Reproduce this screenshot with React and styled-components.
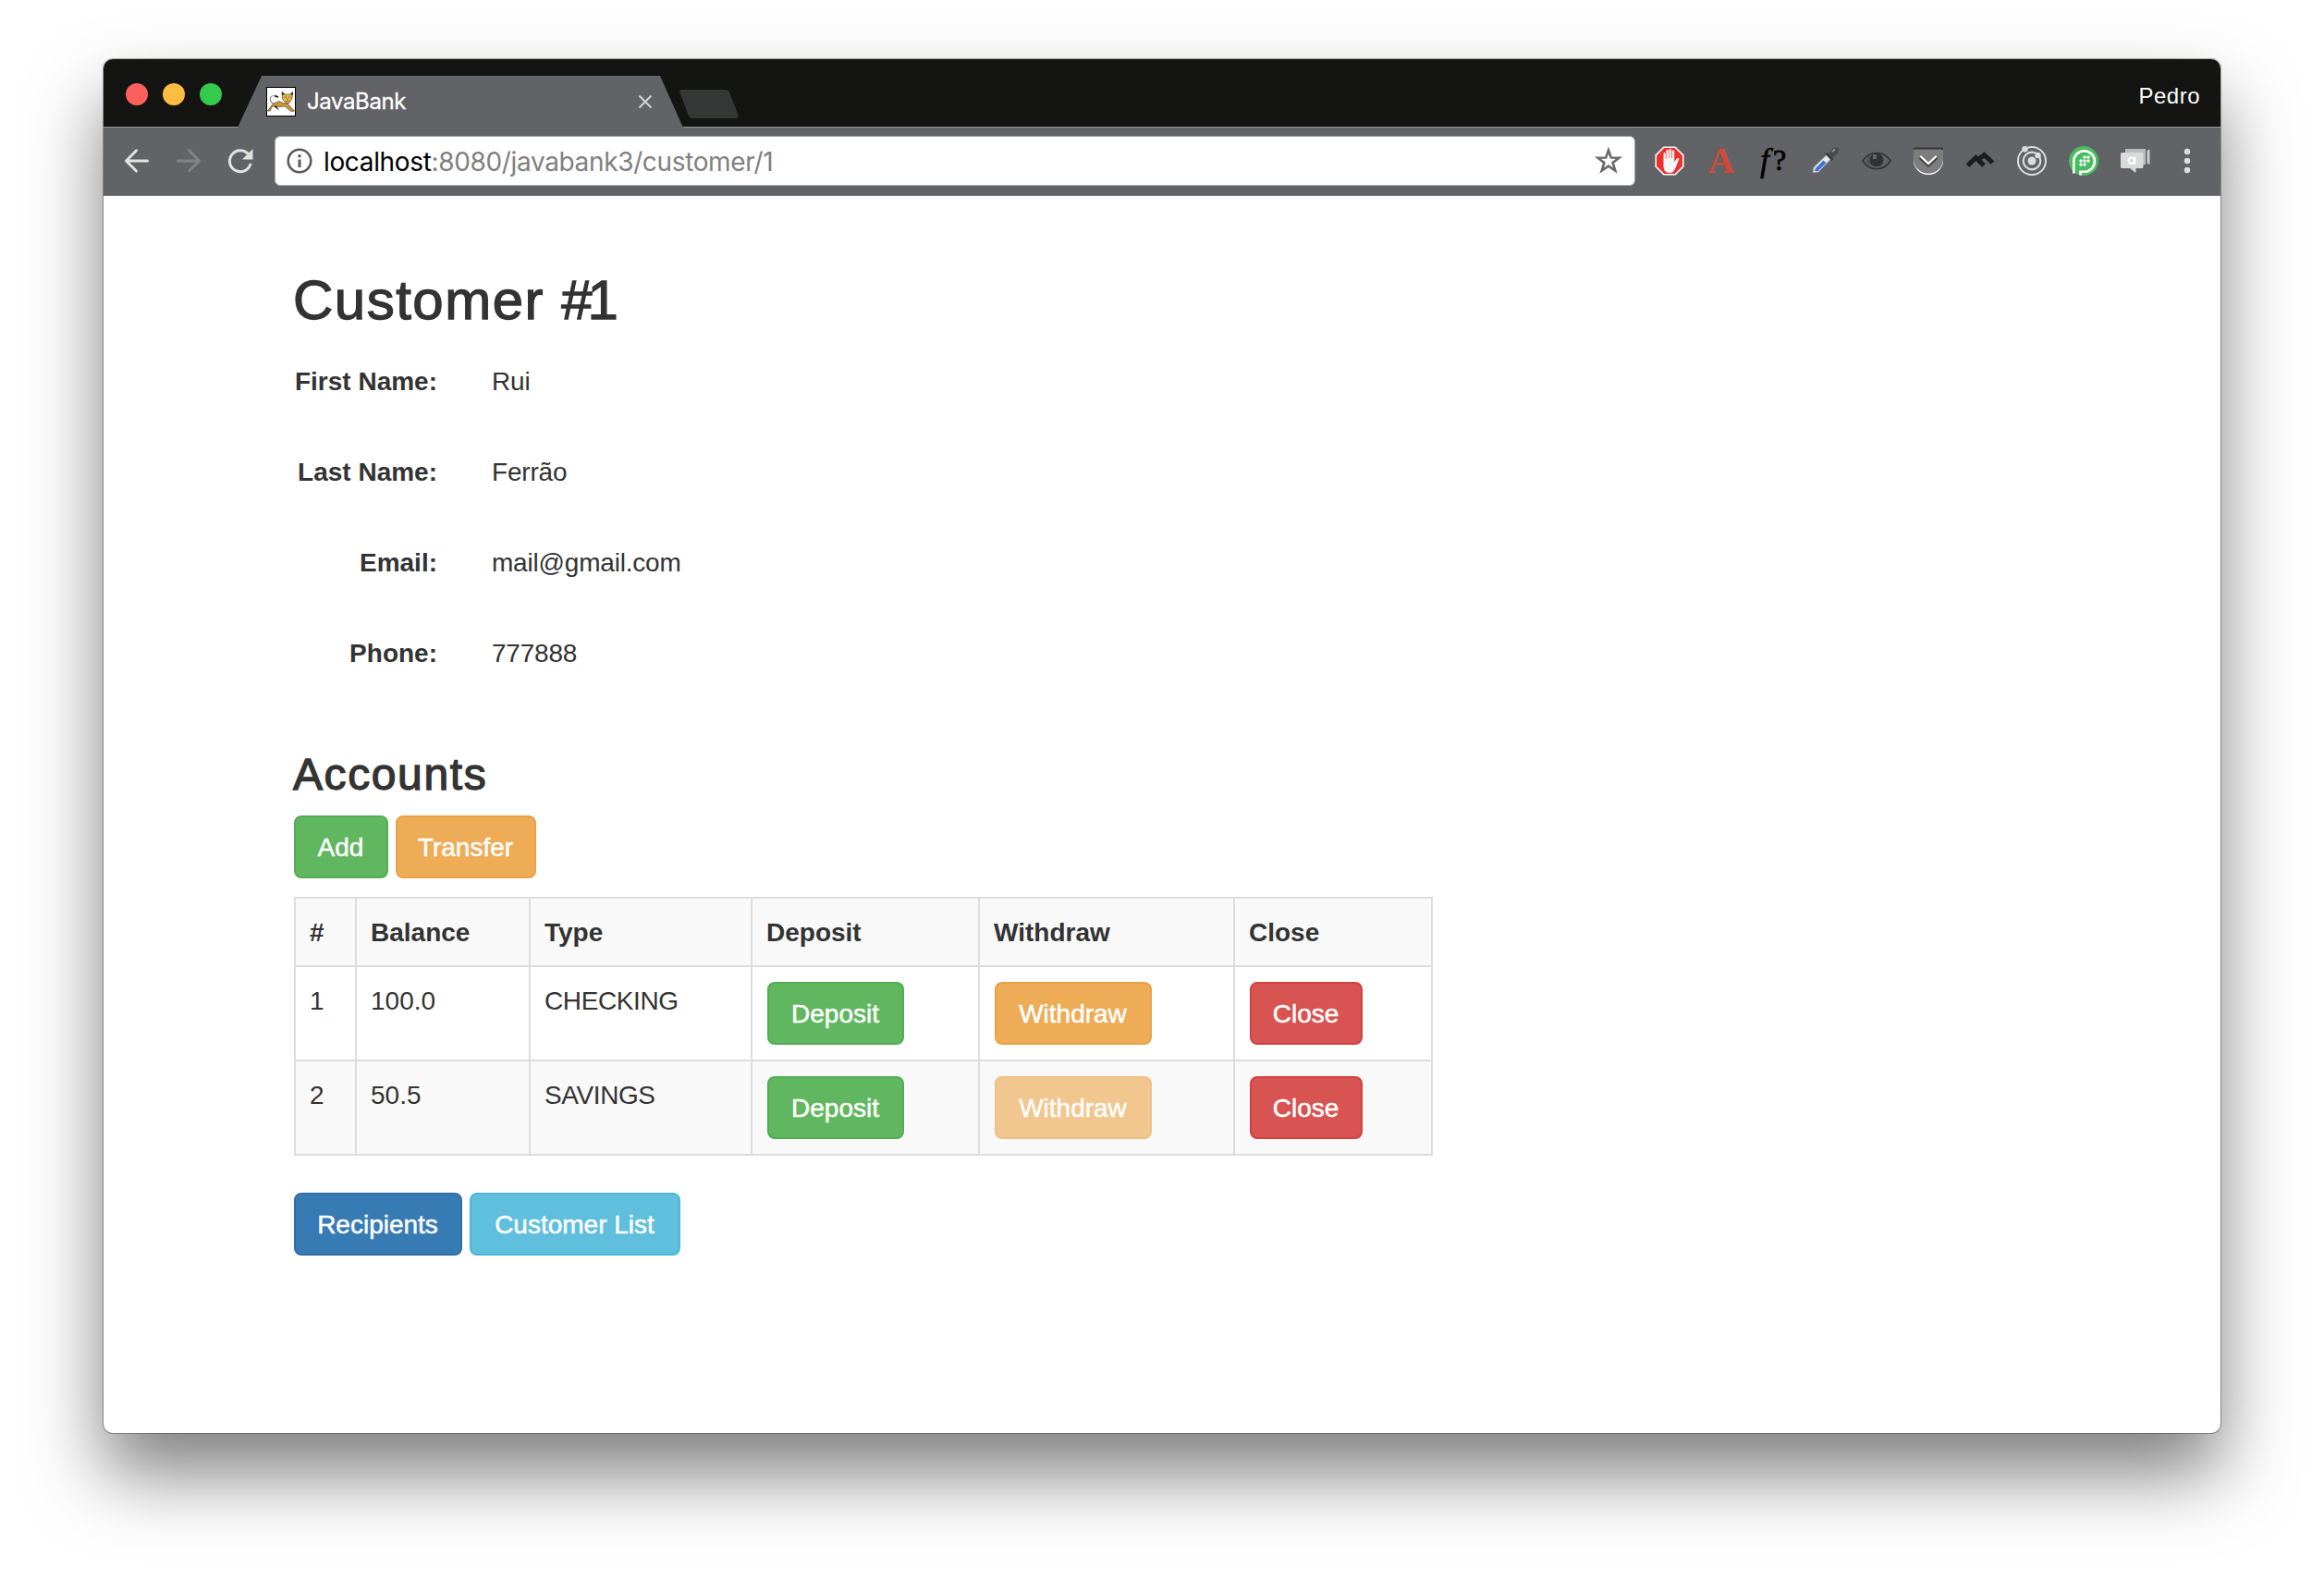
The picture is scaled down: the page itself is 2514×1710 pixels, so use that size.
import React from "react";
import styled, { createGlobalStyle, css } from "styled-components";

const GlobalStyle = createGlobalStyle`
  *, *::before, *::after { box-sizing: border-box; }
  body {
    margin: 0;
    background: #fff;
    color: #333;
    font-family: "Liberation Sans", Arial, sans-serif;
    font-size: 28px;
    line-height: 42px;
  }
`;

const Desktop = styled.div`
  height: 1710px;
  padding: 64px 112px 160px;
  overflow: hidden;
`;

const Window = styled.main`
  display: flex;
  flex-direction: column;
  width: 2290px;
  height: 1486px;
  border-radius: 10px;
  background: #fff;
  box-shadow: 0 0 0 1px rgba(0, 0, 0, 0.3), 0 44px 80px rgba(0, 0, 0, 0.5);
`;

const TitleBar = styled.header`
  display: flex;
  align-items: flex-start;
  height: 73px;
  padding: 0 22px 0 24px;
  border-radius: 10px 10px 0 0;
  background: #141412;
`;

const Lights = styled.div`
  display: flex;
  gap: 16px;
  margin-top: 26px;
`;

const Light = styled.span`
  width: 24px;
  height: 24px;
  border-radius: 50%;
  background: ${(p) => p.$color};
`;

const Tab = styled.div`
  display: flex;
  align-items: center;
  width: 482px;
  height: 56px;
  margin: 18px 0 0 17px;
  padding: 0 33px 0 31px;
  position: relative;
  z-index: 1;
  background: #626366;
  clip-path: polygon(26px 0, 457px 0, 482px 56px, 0 56px);
`;

const TabTitle = styled.span`
  flex: 1;
  margin-left: 12px;
  color: #fff;
  font: 400 24px/30px Inter, "Open Sans", sans-serif;
  letter-spacing: -0.4px;
  -webkit-text-stroke: 0.3px #fff;
`;

const NewTab = styled.span`
  width: 54px;
  height: 31px;
  margin: 33px 0 0 1px;
  border-radius: 4px;
  background: #353736;
  transform: skewX(21deg);
`;

const Profile = styled.span`
  margin: 25px 0 0 auto;
  color: #fff;
  font-size: 24px;
  line-height: 30px;
  letter-spacing: 0.5px;
`;

const Toolbar = styled.nav`
  display: flex;
  align-items: center;
  height: 75px;
  padding: 0 8px 1px;
  border-top: 1px solid #97989a;
  border-bottom: 1px solid #77787b;
  background: #626366;
`;

const NavIcon = styled.span`
  display: flex;
  justify-content: center;
  width: 56px;
  color: ${(p) => (p.$dim ? "#828385" : "#e1e1e1")};
`;

const AddressBar = styled.div`
  display: flex;
  align-items: center;
  width: 1472px;
  height: 54px;
  margin: 0 9px 0 9px;
  padding: 0 12px;
  border: 1px solid #a5a6a8;
  border-radius: 6px;
  background: #fff;
`;

const Url = styled.span`
  flex: 1;
  margin-left: 12px;
  padding-top: 2px;
  color: #808080;
  font: 400 28px/36px Inter, Roboto, sans-serif;
  letter-spacing: -0.35px;
`;

const Host = styled.span`
  color: #000;
`;

const Extension = styled.span`
  display: flex;
  align-items: center;
  justify-content: center;
  width: 56px;
  height: 40px;
`;

const SerifGlyph = styled.span`
  padding-bottom: ${(p) => p.$lift || 0}px;
  font-family: "Liberation Serif", "Times New Roman", serif;
  font-weight: ${(p) => p.$weight || 400};
  font-size: ${(p) => p.$size}px;
  line-height: 40px;
  color: ${(p) => p.$color};
  letter-spacing: ${(p) => p.$spacing || 0}px;
  -webkit-text-stroke: ${(p) => p.$stroke || 0}px ${(p) => p.$color};
`;

const Page = styled.section`
  padding: 80px 206px 0;
`;

const headingBase = css`
  margin: 0;
  font-weight: 400;
  color: #333;
  -webkit-text-stroke: 1.3px #333;
`;

const Title = styled.h1`
  ${headingBase}
  margin-left: -1px;
  font-size: 60px;
  line-height: 66px;
  letter-spacing: 1.5px;
`;

const CustomerNumber = styled.span`
  letter-spacing: -5px;
`;

const Subtitle = styled.h2`
  ${headingBase}
  margin: 27px 0 0 -1px;
  font-size: 48px;
  line-height: 53px;
  letter-spacing: 1.6px;
`;

const Details = styled.dl`
  display: grid;
  grid-template-columns: 155px 1fr;
  grid-auto-rows: 98px;
  column-gap: 59px;
  margin: 34px 0 0;
`;

const Term = styled.dt`
  font-weight: 700;
  text-align: right;
  white-space: nowrap;
`;

const Value = styled.dd`
  margin: 0;
  letter-spacing: -0.2px;
`;

const buttonColors = {
  success: ["#60b760", "#51ae54"],
  warning: ["#eeac57", "#eba244"],
  danger: ["#d75452", "#d2413f"],
  primary: ["#377bb5", "#316ea2"],
  info: ["#5fbfdd", "#4bb7d8"],
};

const Button = styled.button`
  display: block;
  width: ${(p) => p.$width}px;
  height: 68px;
  padding: 2px 1px 0 0;
  border: 2px solid ${(p) => buttonColors[p.$kind][1]};
  border-radius: 8px;
  background: ${(p) => buttonColors[p.$kind][0]};
  color: #fff;
  font: inherit;
  letter-spacing: 0;
  text-align: center;
  white-space: nowrap;
  -webkit-text-stroke: 0.5px #fff;
  &:disabled { opacity: 0.65; }
`;

const ButtonRow = styled.div`
  display: flex;
  gap: 8px;
  margin-top: ${(p) => p.$top}px;
`;

const Table = styled.table`
  width: 1232px;
  margin-top: 20px;
  table-layout: fixed;
  border-collapse: collapse;
  border-spacing: 0;
`;

const Column = styled.col`
  width: ${(p) => p.$width}px;
`;

const Row = styled.tr`
  background: ${(p) => (p.$striped ? "#f9f9f9" : "#fff")};
`;

const cell = css`
  border: 2px solid #ddd;
  text-align: left;
  vertical-align: top;
`;
const HeadCell = styled.th`
  ${cell}
  padding: 16px 16px 14px 15px;
`;
const Cell = styled.td`
  ${cell}
  padding: 16px 16px 16px ${(p) => (p.$action ? 16 : 15)}px;
  letter-spacing: ${(p) => (p.$tight ? -0.4 : 0)}px;
`;

const Favicon = () => (
  <svg width="32" height="32" viewBox="0 0 32 32">
    <rect x=".5" y=".5" width="31" height="31" fill="#fff" stroke="#000" />
    <path d="M8.500 18C3 17 3 10 8 9.500L11 9" fill="none" stroke="#888" strokeWidth="1.200" />
    <path d="M9.500 9.800 13 11" stroke="#111" strokeWidth="1.800" />
    <path d="M1.500 26 7 18.500 14 15.500 18 17.500 23 18 30.500 26 27 26.500 20 21 13 21.500 7 20.500 4 26Z" fill="#cf9733" stroke="#54452b" strokeWidth=".7" />
    <path d="M8 21 14 25.500 11 20.500Z" fill="#222" />
    <path d="M17 5.500 20 8 26 8 28.500 5.500 28 13 25 17.500 21 17.500 17.500 13Z" fill="#e9b64d" stroke="#59492f" strokeWidth=".7" />
    <path d="M17 5 20 8 17.300 9ZM29 5 26 8 28.600 9Z" fill="#29251f" />
    <path d="M19.500 11h2.200M24.300 11h2.200M23 11.500v2.500M21 15.500h4" stroke="#7a602d" strokeWidth=".9" />
  </svg>
);

const CloseIcon = () => (
  <svg width="16" height="16" viewBox="0 0 16 16" stroke="#d0d0d1" strokeWidth="2.200">
    <path d="M1.500 1.500 14.500 14.500M14.500 1.500 1.500 14.500" />
  </svg>
);

const ArrowIcon = ({ flip }) => (
  <svg width="28" height="28" viewBox="0 0 28 28" fill="none" stroke="currentColor" strokeWidth="3" strokeLinecap="round" strokeLinejoin="round">
    <path d={flip ? "M2.500 14H25M14.500 2.800 25.500 14 14.500 25" : "M25.500 14H3M13.500 2.800 2.500 14 13.500 25"} />
  </svg>
);

const ReloadIcon = () => (
  <svg width="28" height="28" viewBox="0 0 28 28">
    <path d="M24.800 18A11.500 11.500 0 1 1 21.500 5.500" fill="none" stroke="currentColor" strokeWidth="3" strokeLinecap="round" />
    <path d="M27.500 1V12.500H16Z" fill="currentColor" />
  </svg>
);

const InfoIcon = () => (
  <svg width="28" height="28" viewBox="0 0 28 28">
    <circle cx="14" cy="14" r="12.300" fill="none" stroke="#5a5a5a" strokeWidth="2.600" />
    <path d="M12.500 7.300h3v3h-3zM12.500 12.500h3v8.500h-3z" fill="#5a5a5a" />
  </svg>
);

const StarIcon = () => (
  <svg width="32" height="32" viewBox="0 0 32 32">
    <path d="M16 4.500 18.800 12.500 27.500 12.700 20.600 17.900 23.300 26.500 16 21.600 8.700 26.500 11.400 17.900 4.500 12.700 13.200 12.500Z" fill="none" stroke="#6a6a6c" strokeWidth="2.600" />
  </svg>
);

const BlockerIcon = () => (
  <svg width="32" height="32" viewBox="0 0 32 32">
    <path d="M9.500.5h13L31.500 9.500v13L22.500 31.500h-13L.5 22.500v-13Z" fill="#fff" />
    <path d="M10.200 2h11.600L30 10.200v11.600L21.800 30H10.200L2 21.800V10.200Z" fill="#e9322d" />
    <path d="M9.500 8.500c0-2 2.300-2 2.300 0V14h.7V5.500c0-2 2.500-2 2.500 0V13h.6V4.500c0-2 2.500-2 2.500 0V13h.7V6c0-2 2.400-2 2.400 0v11c1.500-1.500 2-4 4.300-4 1 0 1 .8.600 1.700C24.500 18.500 23 23 21.300 26c-1.400 2.500-3.300 3-5.300 3-4 0-6.500-3-6.500-7Z" fill="#f5f5f5" />
  </svg>
);

const DropperIcon = () => (
  <svg width="32" height="32" viewBox="0 0 32 32">
    <path d="M3 28.500 4 23 18 9.500 22.500 14 9 28Z" fill="#e8e8e8" stroke="#9b9b9b" />
    <path d="M5 27 6 24 14.500 15.500 17.500 18.300 8.500 27Z" fill="#3d6fdc" />
    <path d="M16.500 8.500 18.500 7 25.500 14 23.500 16Z" fill="#3a3b3d" />
    <path d="M20 8.500C22 6 24 1.500 28 1.500S31.500 7 28.500 9L24.500 12.500Z" fill="#4a4b4e" />
    <path d="M24 6 27 3.500" stroke="#919294" strokeWidth="2" />
  </svg>
);

const EyeIcon = () => (
  <svg width="32" height="24" viewBox="0 0 32 24">
    <path d="M1 12C8 .5 24 .5 31 12 24 23.500 8 23.500 1 12Z" fill="none" stroke="#303234" strokeWidth="1.500" />
    <circle cx="16" cy="11" r="7.500" fill="#303234" />
    <path d="M12 5h4v5h-4z" fill="#626366" />
    <path d="M7 6 10 4.500 8 10 10 18 5 14Z" fill="#303234" opacity=".35" />
  </svg>
);

const PocketIcon = () => (
  <svg width="32" height="32" viewBox="0 0 32 32">
    <path d="M0 3h32v12.500a16 15.500 0 0 1-32 0Z" fill="#fff" />
    <path d="M0 2h32v12a16 15.700 0 0 1-32 0Z" fill="#7d7d7e" />
    <path d="M.5 4V3.500Q.5 2.500 2 2.500h28q1.500 0 1.500 1V4" fill="none" stroke="#343434" strokeWidth="2" />
    <path d="M8 13.500 16 21 24 13.500" fill="none" stroke="#454545" strokeWidth="3.500" strokeLinecap="round" strokeLinejoin="round" />
    <path d="M8 11.500 16 19 24 11.500" fill="none" stroke="#fff" strokeWidth="2.200" strokeLinecap="round" strokeLinejoin="round" />
  </svg>
);

const PeaksIcon = () => (
  <svg width="32" height="32" viewBox="0 0 32 32" fill="none" stroke="#1b1c1d" strokeWidth="5">
    <path d="M2.500 21 11.500 12.500 20 21" />
    <path d="M14 14.500 20.500 9.500 29.500 18" />
  </svg>
);

const OrbitIcon = () => (
  <svg width="32" height="32" viewBox="0 0 32 32" fill="none" stroke="#dcdcdd" strokeWidth="2">
    <circle cx="16" cy="16" r="15" />
    <circle cx="16" cy="16" r="9.300" strokeWidth="2.200" />
    <circle cx="16" cy="16" r="4.500" fill="#dcdcdd" stroke="none" />
    <circle cx="8.500" cy="3.300" r="3.200" fill="#dcdcdd" stroke="none" />
    <circle cx="22.500" cy="10" r="3.200" fill="#dcdcdd" stroke="none" />
  </svg>
);

const dots = [[17, 12], [21, 12], [13, 16], [17, 16], [21, 16], [13, 20], [17, 20]];
const PushIcon = () => (
  <svg width="32" height="32" viewBox="0 0 32 32">
    <circle cx="16" cy="16" r="16" fill="#48bd60" />
    <path d="M5.300 29.500V16.500a11.300 11.300 0 1 1 11.300 11.300H12.500V31.500" fill="none" stroke="#fff" strokeWidth="2.600" />
    {dots.map(([x, y]) => <circle key={`${x}-${y}`} cx={x} cy={y} r="1.700" fill="#fff" />)}
  </svg>
);

const ChatIcon = () => (
  <svg width="32" height="32" viewBox="0 0 32 32">
    <path d="M5 3h22v17H5Z" fill="#b9babb" />
    <path d="M28.500 5 31.500 3.500V20L28.500 18.500Z" fill="#c9cacb" />
    <path d="M1.500 7H23a1.500 1.500 0 0 1 1.500 1.500v14A1.500 1.500 0 0 1 23 24H16.500V29L10 24H1.500A1.500 1.500 0 0 1 0 22.500v-14A1.500 1.500 0 0 1 1.500 7Z" fill="#dadada" />
    <circle cx="11.700" cy="15.700" r="3.200" fill="none" stroke="#fff" strokeWidth="2" />
    <path d="M15.300 11.800v7.800" stroke="#fff" strokeWidth="2" />
  </svg>
);

const MenuIcon = () => (
  <svg width="8" height="28" viewBox="0 0 8 28" fill="#dedede">
    <circle cx="4" cy="4" r="3.200" />
    <circle cx="4" cy="14" r="3.200" />
    <circle cx="4" cy="24" r="3.200" />
  </svg>
);

const customer = [
  ["First Name:", "Rui"],
  ["Last Name:", "Ferrão"],
  ["Email:", "mail@gmail.com"],
  ["Phone:", "777888"],
];
const columns = [["#", 66], ["Balance", 188], ["Type", 240], ["Deposit", 246], ["Withdraw", 276], ["Close", 214]];
const accounts = [
  { id: 1, balance: "100.0", type: "CHECKING", canWithdraw: true },
  { id: 2, balance: "50.5", type: "SAVINGS", canWithdraw: false },
];

export default function App() {
  return (
    <Desktop>
      <GlobalStyle />
      <Window>
        <TitleBar>
          <Lights>
            <Light $color="#fd605c" />
            <Light $color="#fdbd40" />
            <Light $color="#34ca4a" />
          </Lights>
          <Tab>
            <Favicon />
            <TabTitle>JavaBank</TabTitle>
            <CloseIcon />
          </Tab>
          <NewTab />
          <Profile>Pedro</Profile>
        </TitleBar>
        <Toolbar>
          <NavIcon><ArrowIcon /></NavIcon>
          <NavIcon $dim><ArrowIcon flip /></NavIcon>
          <NavIcon><ReloadIcon /></NavIcon>
          <AddressBar>
            <InfoIcon />
            <Url><Host>localhost</Host>:8080/javabank3/customer/1</Url>
            <StarIcon />
          </AddressBar>
          <Extension><BlockerIcon /></Extension>
          <Extension><SerifGlyph $size={40} $weight={700} $color="#d04a38">A</SerifGlyph></Extension>
          <Extension>
            <SerifGlyph as="em" $size={36} $lift={3} $stroke={0.5} $color="#000" $spacing={4}>f</SerifGlyph>
            <SerifGlyph $size={32} $lift={3} $stroke={0.8} $color="#000">?</SerifGlyph>
          </Extension>
          <Extension><DropperIcon /></Extension>
          <Extension><EyeIcon /></Extension>
          <Extension><PocketIcon /></Extension>
          <Extension><PeaksIcon /></Extension>
          <Extension><OrbitIcon /></Extension>
          <Extension><PushIcon /></Extension>
          <Extension><ChatIcon /></Extension>
          <Extension><MenuIcon /></Extension>
        </Toolbar>
        <Page>
          <Title>Customer <CustomerNumber>#1</CustomerNumber></Title>
          <Details>
            {customer.map(([label, value]) => (
              <React.Fragment key={label}>
                <Term>{label}</Term>
                <Value>{value}</Value>
              </React.Fragment>
            ))}
          </Details>
          <Subtitle>Accounts</Subtitle>
          <ButtonRow $top={18}>
            <Button $kind="success" $width={102}>Add</Button>
            <Button $kind="warning" $width={152}>Transfer</Button>
          </ButtonRow>
          <Table>
            <colgroup>
              {columns.map(([name, width]) => <Column key={name} $width={width} />)}
            </colgroup>
            <tbody>
              <Row $striped>
                {columns.map(([name]) => <HeadCell key={name}>{name}</HeadCell>)}
              </Row>
              {accounts.map((a, i) => (
                <Row key={a.id} $striped={i % 2 === 1}>
                  <Cell>{a.id}</Cell>
                  <Cell>{a.balance}</Cell>
                  <Cell $tight>{a.type}</Cell>
                  <Cell $action><Button $kind="success" $width={148}>Deposit</Button></Cell>
                  <Cell $action><Button $kind="warning" $width={170} disabled={!a.canWithdraw}>Withdraw</Button></Cell>
                  <Cell $action><Button $kind="danger" $width={122}>Close</Button></Cell>
                </Row>
              ))}
            </tbody>
          </Table>
          <ButtonRow $top={40}>
            <Button $kind="primary" $width={182}>Recipients</Button>
            <Button $kind="info" $width={228}>Customer List</Button>
          </ButtonRow>
        </Page>
      </Window>
    </Desktop>
  );
}
